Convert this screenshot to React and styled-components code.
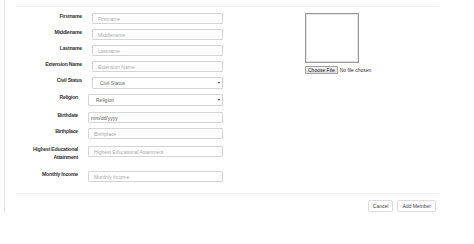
import styled, { createGlobalStyle } from "styled-components";

const GlobalStyle = createGlobalStyle`
  body {
    margin: 0;
    background: #fff;
    font-family: "Liberation Sans", Arial, sans-serif;
    color: #333;
  }
`;

const fields = [
  { label: "Firstname", placeholder: "Firstname", mt: 6 },
  { label: "Middlename", placeholder: "Middlename", mt: 5 },
  { label: "Lastname", placeholder: "Lastname", mt: 5 },
  { label: "Extension Name", placeholder: "Extension Name", mt: 5 },
  { label: "Civil Status", placeholder: "Civil Status", mt: 5, select: true },
  { label: "Religion", placeholder: "Religion", mt: 5, select: true, shifted: true },
  { label: "Birthdate", placeholder: "mm/dd/yyyy", mt: 6, date: true, shifted: true },
  { label: "Birthplace", placeholder: "Birthplace", mt: 5, shifted: true },
  { label: ["Highest Educational", "Attainment"], placeholder: "Highest Educational Attainment", mt: 7, shifted: true },
  { label: "Monthly Income", placeholder: "Monthly Income", mt: 10, shifted: true },
];

const App = () => {
  return (
    <>
      <GlobalStyle />
      <Frame>
        <Inner>
          <Rule />
          <Body>
            <FormColumn>
              {fields.map((f) => (
                <Row key={f.placeholder} $mt={f.mt}>
                  <Label $shifted={f.shifted}>
                    {Array.isArray(f.label)
                      ? f.label.map((l) => <div key={l}>{l}</div>)
                      : f.label}
                  </Label>
                  {f.select ? (
                    <SelectWrap>
                      <Select defaultValue="">
                        <option value="">{f.placeholder}</option>
                      </Select>
                    </SelectWrap>
                  ) : (
                    <Input placeholder={f.placeholder} $date={f.date} />
                  )}
                </Row>
              ))}
            </FormColumn>
            <PhotoColumn>
              <PhotoBox />
              <FileRow>
                <FileButton type="button">Choose File</FileButton>
                <FileText>No file chosen</FileText>
              </FileRow>
            </PhotoColumn>
          </Body>
          <FooterRule />
          <Actions>
            <Button type="button">Cancel</Button>
            <Button type="button">Add Member</Button>
          </Actions>
        </Inner>
      </Frame>
    </>
  );
};

const Frame = styled.div`
  margin-left: 4px;
  height: 213px;
  border-left: 1px solid #e6e6e6;
`;

const Inner = styled.div`
  width: 423px;
  padding: 6px 0 0 11px;
`;

const Rule = styled.div`
  border-top: 1px solid #eeeeee;
`;

const FooterRule = styled(Rule)`
  margin-top: 11px;
`;

const Body = styled.div`
  display: flex;
  align-items: flex-start;
`;

const FormColumn = styled.div`
  width: 207px;
  display: flex;
  flex-direction: column;
`;

const Row = styled.div`
  display: flex;
  align-items: flex-start;
  gap: 10px;
  margin-top: ${(p) => p.$mt}px;
`;

const Label = styled.div`
  flex: 0 0 ${(p) => (p.$shifted ? 62 : 66)}px;
  text-align: right;
  font-size: 5.2px;
  font-weight: bold;
  letter-spacing: -0.25px;
  line-height: 7.5px;
  color: #333;
`;

const Input = styled.input`
  flex: 1;
  min-width: 0;
  height: 11px;
  box-sizing: border-box;
  margin: 0;
  padding: 0 ${(p) => (p.$date ? 2 : 5)}px;
  border: 1px solid #d4d4d4;
  border-radius: 1px;
  font-family: inherit;
  font-size: 5px;
  color: #555;
  outline: none;

  &::placeholder {
    color: ${(p) => (p.$date ? "#555" : "#aaa")};
  }
`;

const SelectWrap = styled.div`
  position: relative;
  flex: 1;
  min-width: 0;

  &::after {
    content: "";
    position: absolute;
    right: 3px;
    top: 5px;
    border-left: 1.2px solid transparent;
    border-right: 1.2px solid transparent;
    border-top: 2px solid #444;
  }
`;

const Select = styled.select`
  appearance: none;
  display: block;
  width: 100%;
  height: 12px;
  box-sizing: border-box;
  margin: 0;
  padding: 0 0 0 7px;
  border: 1px solid #d4d4d4;
  border-radius: 1px;
  background: #fff;
  font-family: inherit;
  font-size: 5px;
  color: #666;
  outline: none;
`;

const PhotoColumn = styled.div`
  margin-left: 82px;
  margin-top: 6px;
  display: flex;
  flex-direction: column;
  gap: 3px;
`;

const PhotoBox = styled.div`
  width: 54px;
  height: 50px;
  box-sizing: border-box;
  border: 1px solid #9a9a9a;
  box-shadow: inset 0 0 0 0.5px #c8c8c8;
`;

const FileRow = styled.div`
  display: flex;
  align-items: center;
  gap: 2px;
`;

const FileButton = styled.button`
  height: 8px;
  margin: 0;
  padding: 0 2px;
  border: 1px solid #9f9f9f;
  border-radius: 1px;
  background: linear-gradient(#f4f4f4, #dedede);
  font-family: inherit;
  font-size: 5px;
  line-height: 6px;
  color: #222;
`;

const FileText = styled.span`
  font-size: 5px;
  color: #333;
`;

const Actions = styled.div`
  display: flex;
  justify-content: flex-end;
  gap: 4px;
  padding: 6px 3px 0 0;
`;

const Button = styled.button`
  height: 12px;
  margin: 0;
  padding: 0 4px;
  border: 1px solid #dcdcdc;
  border-radius: 2px;
  background: #fff;
  font-family: inherit;
  font-size: 5px;
  color: #444;
`;

export default App;
